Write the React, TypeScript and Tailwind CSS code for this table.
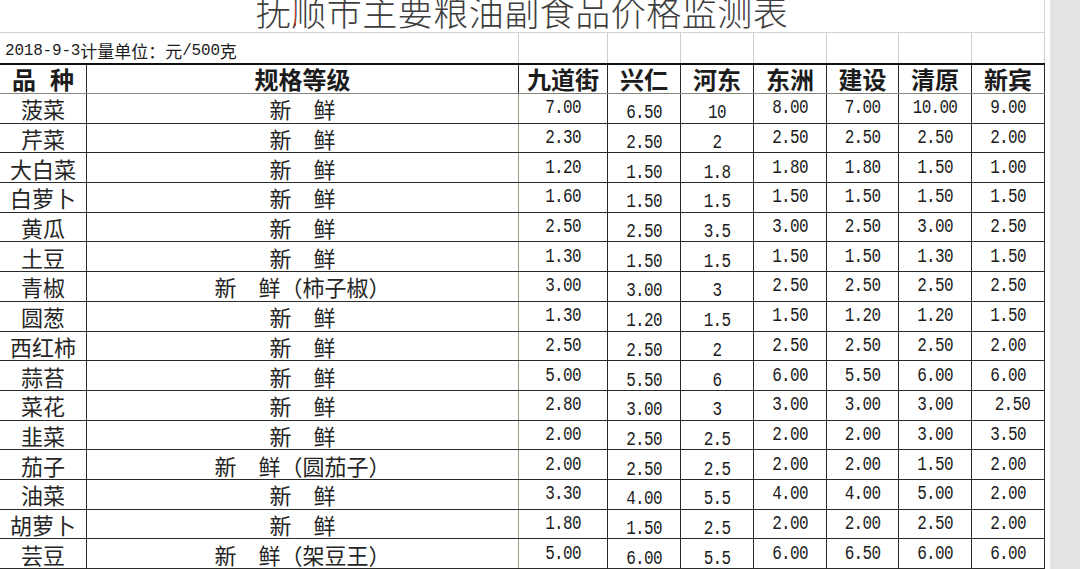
import React from 'react';

const rows: [string, string, string[]][] = [
  ['菠菜', '新　鲜', ['7.00', '6.50', '10', '8.00', '7.00', '10.00', '9.00']],
  ['芹菜', '新　鲜', ['2.30', '2.50', '2', '2.50', '2.50', '2.50', '2.00']],
  ['大白菜', '新　鲜', ['1.20', '1.50', '1.8', '1.80', '1.80', '1.50', '1.00']],
  ['白萝卜', '新　鲜', ['1.60', '1.50', '1.5', '1.50', '1.50', '1.50', '1.50']],
  ['黄瓜', '新　鲜', ['2.50', '2.50', '3.5', '3.00', '2.50', '3.00', '2.50']],
  ['土豆', '新　鲜', ['1.30', '1.50', '1.5', '1.50', '1.50', '1.30', '1.50']],
  ['青椒', '新　鲜（柿子椒）', ['3.00', '3.00', '3', '2.50', '2.50', '2.50', '2.50']],
  ['圆葱', '新　鲜', ['1.30', '1.20', '1.5', '1.50', '1.20', '1.20', '1.50']],
  ['西红柿', '新　鲜', ['2.50', '2.50', '2', '2.50', '2.50', '2.50', '2.00']],
  ['蒜苔', '新　鲜', ['5.00', '5.50', '6', '6.00', '5.50', '6.00', '6.00']],
  ['菜花', '新　鲜', ['2.80', '3.00', '3', '3.00', '3.00', '3.00', ' 2.50']],
  ['韭菜', '新　鲜', ['2.00', '2.50', '2.5', '2.00', '2.00', '3.00', '3.50']],
  ['茄子', '新　鲜（圆茄子）', ['2.00', '2.50', '2.5', '2.00', '2.00', '1.50', '2.00']],
  ['油菜', '新　鲜', ['3.30', '4.00', '5.5', '4.00', '4.00', '5.00', '2.00']],
  ['胡萝卜', '新　鲜', ['1.80', '1.50', '2.5', '2.00', '2.00', '2.50', '2.00']],
  ['芸豆', '新　鲜（架豆王）', ['5.00', '6.00', '5.5', '6.00', '6.50', '6.00', '6.00']],
];

const districts = ['九道街', '兴仁', '河东', '东洲', '建设', '清原', '新宾'];

const cjk = "font-['Noto_Sans_CJK_SC',sans-serif]";
const mono = "font-['Liberation_Mono',monospace]";
const cols = 'grid grid-cols-[87px_432px_89px_73px_73px_73px_72px_73px_73px]';

export default function App() {
  return (
    <div className={`w-[1080px] h-[569px] overflow-hidden bg-[#e3e5e5] flex text-[#1c1c1c] ${cjk}`}>
      <div className="w-[1050px] shrink-0 flex flex-col bg-white pr-[5px]">
        {/* title row */}
        <div className="relative h-[33px] border-b border-r border-[#d2d2d2] flex justify-center items-start">
          <span className="-mt-[7px] text-[35px] leading-[35px] tracking-[0.5px] text-[#3e3e3e] font-light whitespace-nowrap">
            抚顺市主要粮油副食品价格监测表
          </span>
          <div className="absolute left-[295px] top-[2px] w-px h-[24px] bg-[#cc3b3b]" />
        </div>

        {/* date / unit row */}
        <div className={`${cols} h-[30px]`}>
          <div className="col-span-2 flex items-center pl-[5px] pt-[5px] border-r border-[#cfcfcf] text-[17px] leading-none">
            <span className={`${mono} text-[16px] tracking-[-0.2px]`}>2018-9-3</span>
            <span>计量单位：元</span>
            <span className={`${mono} text-[16px] tracking-[-0.2px]`}>/500</span>
            <span>克</span>
          </div>
          {districts.map((d) => (
            <div key={d} className="border-r border-[#cfcfcf]" />
          ))}
        </div>

        {/* header row */}
        <div className={`${cols} h-[31px] border-t-2 border-t-[#111] border-b border-b-[#85877a] font-bold text-[24px] leading-none`}>
          <div className="flex items-center justify-center gap-[14px] border-r border-[#2a2a2a]">
            <span>品</span>
            <span>种</span>
          </div>
          <div className="flex items-center justify-center border-r border-[#2a2a2a]">规格等级</div>
          {districts.map((d) => (
            <div key={d} className="flex items-center justify-center border-r border-[#2a2a2a]">
              {d}
            </div>
          ))}
        </div>

        {/* data rows */}
        {rows.map(([name, spec, prices]) => (
          <div key={name} className={`${cols} h-[29.7px] border-b border-[#2a2a2a]`}>
            <div className="flex items-center justify-center border-r border-[#2a2a2a] text-[22px] leading-none text-[#262626]">
              {name}
            </div>
            <div className="flex items-center justify-center border-r border-[#9a9c88] text-[22px] leading-none text-[#262626]">
              {spec}
            </div>
            {prices.map((p, i) => (
              <div
                key={i}
                className={`flex items-center justify-center border-r border-[#2a2a2a] ${mono} text-[16px] leading-none tracking-[-0.7px] whitespace-pre ${
                  i === 1 || i === 2 ? 'pt-[10px]' : ''
                }`}
              >
                <span className="scale-y-[1.25]">{p}</span>
              </div>
            ))}
          </div>
        ))}
      </div>
    </div>
  );
}
